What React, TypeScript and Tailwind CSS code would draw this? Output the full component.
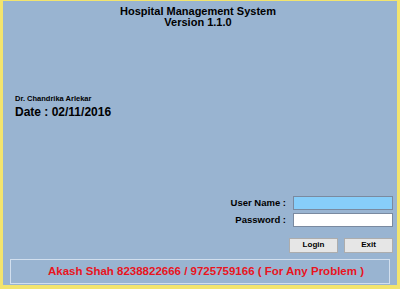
export default function App() {
  return (
    <div
      className="flex h-[289px] w-[400px] flex-col border-t-[1px] border-r-[3px] border-b-[4px] border-l-[3px] border-[#f2e46e] bg-[#99b4d1] text-black"
      style={{ fontFamily: '"Liberation Sans", Arial, sans-serif' }}
    >
      {/* Title */}
      <div className="mt-[5px] flex flex-col items-center text-[11px] font-bold leading-[11px]">
        <span className="-ml-[4px]">Hospital Management System</span>
        <span className="-ml-[4px]">Version 1.1.0</span>
      </div>

      {/* Doctor + date */}
      <div className="mt-[66px] flex flex-col pl-[12px]">
        <span className="text-[7.5px] font-bold leading-[10px]">Dr. Chandrika Arlekar</span>
        <span className="mt-[2px] text-[12px] font-bold leading-[12px]">Date : 02/11/2016</span>
      </div>

      {/* Login form */}
      <div className="mt-[78px] flex flex-col items-end pr-[4px]">
        <div className="flex items-center gap-[7px]">
          <span className="text-[9.5px] font-bold">User Name :</span>
          <div className="h-[14px] w-[100px] border border-[#7a8aa0] bg-[#87cefa]" />
        </div>
        <div className="mt-[3px] flex items-center gap-[7px]">
          <span className="text-[9.5px] font-bold">Password :</span>
          <div className="h-[14px] w-[100px] border border-[#7a8aa0] bg-white" />
        </div>
        <div className="mt-[10px] flex gap-[6px]">
          <button className="flex h-[15px] w-[49px] items-center justify-center border border-[#adadad] bg-[#e6e6e6] text-[8px] font-bold">
            Login
          </button>
          <button className="flex h-[15px] w-[49px] items-center justify-center border border-[#adadad] bg-[#e6e6e6] text-[8px] font-bold">
            Exit
          </button>
        </div>
      </div>

      {/* Support footer */}
      <div className="mx-[7px] mt-auto mb-[1px] flex h-[25px] items-center justify-center border border-[#d2dfee] pl-[12px] text-[11.5px] font-bold text-[#e8141e]">
        Akash Shah 8238822666 / 9725759166 ( For Any Problem )
      </div>
    </div>
  );
}
